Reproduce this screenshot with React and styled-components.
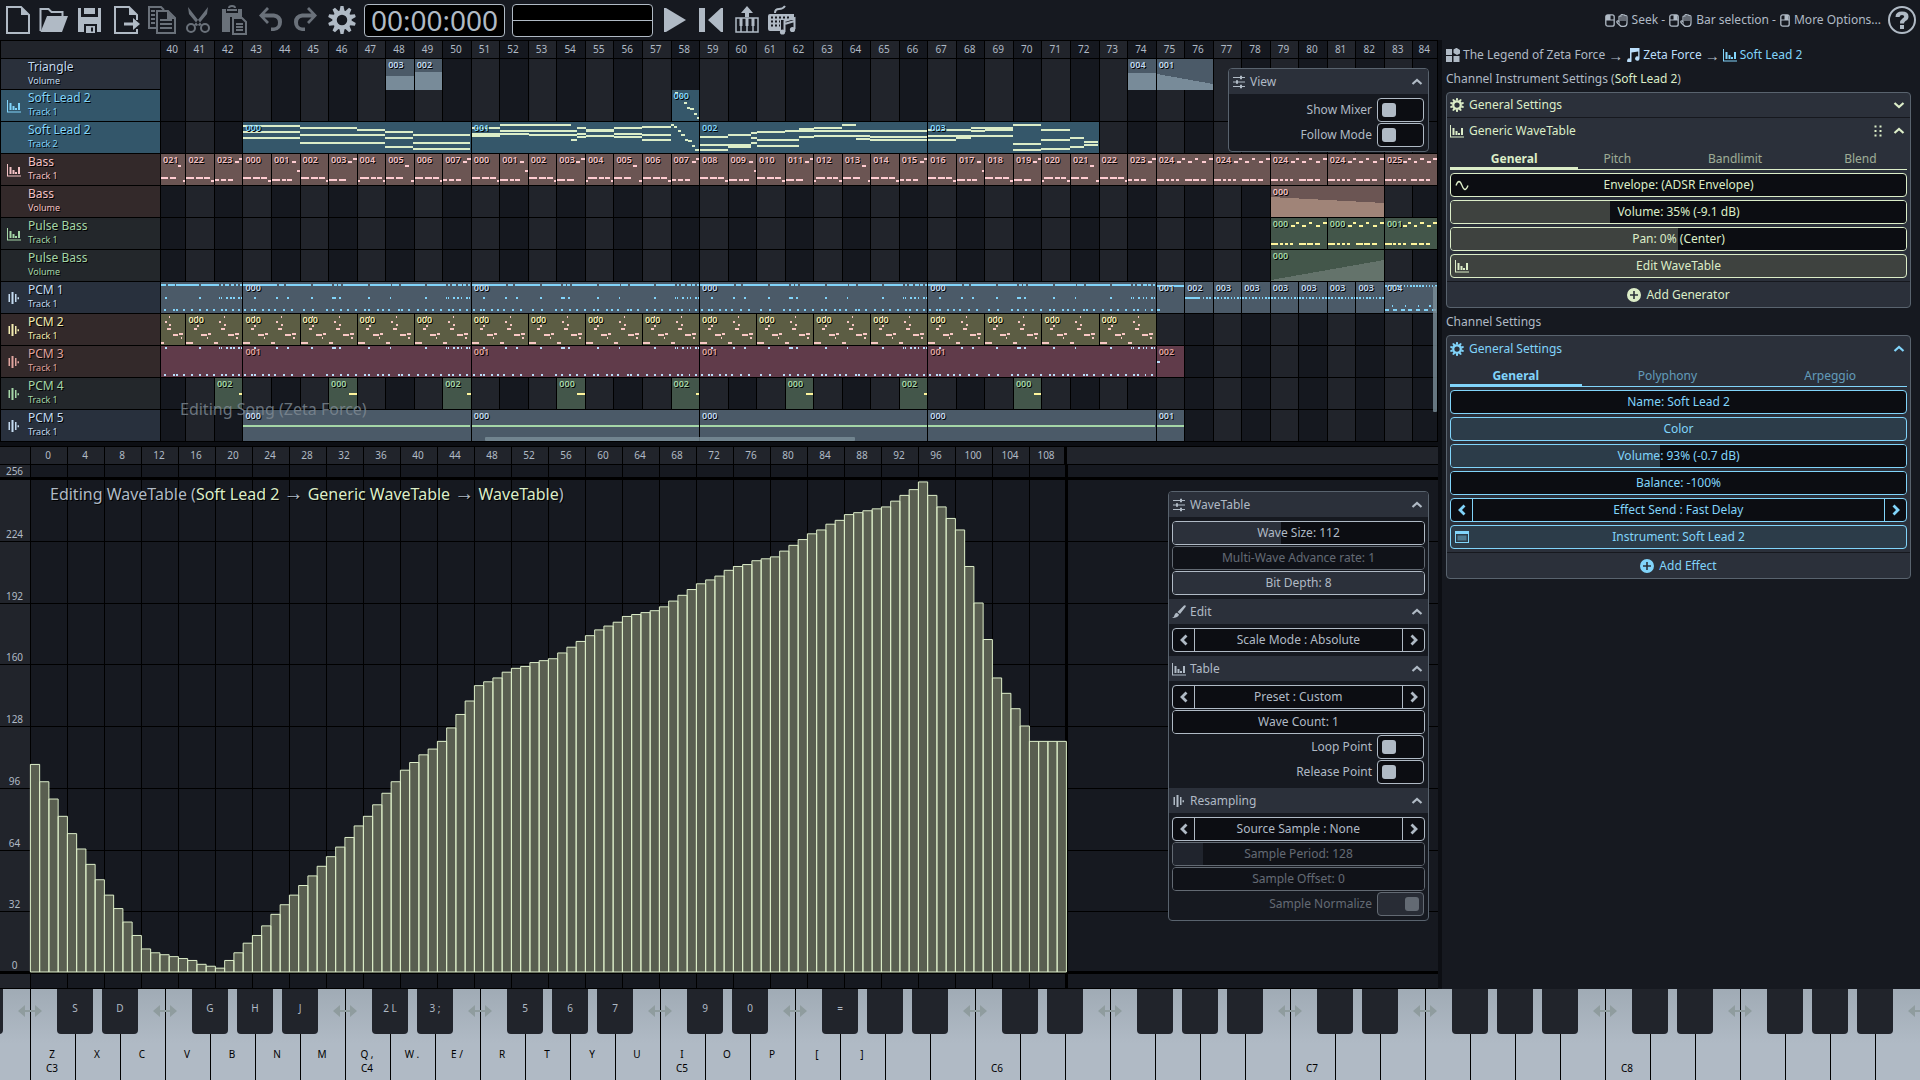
import React from "react";
import styled, { createGlobalStyle, css } from "styled-components";

const c = {
  page: "#161920",
  dark: "#15181f",
  light: "#21242b",
  gap: "#0c0e13",
  field: "#0c0d12",
  header: "#2b303a",
  edge: "#59636e",
  text: "#b0bac5",
  lime: "#dcedc8",
  sky: "#81d4fa",
  ice: "#bbdefb",
};

const GlobalStyle = createGlobalStyle`
  * { box-sizing: border-box; }
  html, body, #root { height: 100%; }
  body {
    margin: 0;
    overflow: hidden;
    background: ${c.page};
    color: ${c.text};
    font: 12px/16px "Noto Sans", sans-serif;
  }
  button, input, select {
    font: inherit;
    color: inherit;
    margin: 0;
    padding: 0;
    border: 0;
    background: none;
  }
  a { color: inherit; text-decoration: none; }
`;

/* ---------- frame ---------- */

const Page = styled.div`
  display: flex;
  flex-direction: column;
  height: 100vh;
`;
const Toolbar = styled.header`
  display: flex;
  align-items: center;
  flex: none;
  height: 40px;
`;
const ToolButton = styled.button`
  display: flex;
  align-items: center;
  justify-content: center;
  flex: none;
  width: 36px;
  height: 40px;
  opacity: ${(p) => (p.disabled ? 0.55 : 1)};
`;
const Display = styled.div`
  display: flex;
  align-items: center;
  justify-content: center;
  flex: none;
  width: 141px;
  height: 33px;
  margin: 1px 3px 0 4px;
  border: 1px solid ${c.text};
  border-radius: 4px;
  background: #000;
  font-size: 28px;
  line-height: 31px;
`;
const ScopeLine = styled.div`
  width: 100%;
  height: 1px;
  background: ${c.text};
`;
const Hints = styled.div`
  display: flex;
  align-items: center;
  gap: 4px;
  margin-left: auto;
  padding-right: 3px;
`;
const Gesture = styled.span`
  display: flex;
  align-items: center;
  gap: 1px;
`;
const Workspace = styled.div`
  display: flex;
  flex: 1;
  min-height: 0;
`;
const Editors = styled.main`
  display: flex;
  flex-direction: column;
  flex: 1;
  min-width: 0;
`;
const Arrow = styled.span`
  font-size: 1.25em;
  line-height: 1;
`;

/* ---------- icons ---------- */

const Svg = ({ size = 16, w, h, box = "0 0 28 28", children }) => (
  <svg width={w || size} height={h || size} viewBox={box} fill="currentColor" stroke="none" aria-hidden="true">
    {children}
  </svg>
);
const line = (width) => ({ fill: "none", stroke: "currentColor", strokeWidth: width });

const NewIcon = () => (
  <Svg size={28}>
    <path d="M3 1h14l8 8v18H3z" {...line(2)} />
    <path d="M17 1v8h8z" />
  </Svg>
);
const OpenIcon = () => (
  <Svg size={30} box="0 0 30 30">
    <path d="M1.500 26V4h8l3 3h11v4" {...line(2)} />
    <path d="M8 11h21l-6 16H1.500z" />
  </Svg>
);
const SaveIcon = () => (
  <Svg size={28}>
    <path d="M2 2h3v9h17V2h3v24h-4v-8H8v8H2zM8 2h11v6H8zM10 20h9v7h-9zM15 21.500v4h2v-4z" fillRule="evenodd" />
  </Svg>
);
const ExportIcon = () => (
  <Svg size={28}>
    <path d="M25 14V9l-8-8H3v26h22v-4" {...line(2)} />
    <path d="M17 1v8h8zM12 16.500h9V12l7 6-7 6v-4.500h-9z" />
  </Svg>
);
const CopyIcon = () => (
  <Svg size={28}>
    <path d="M8 22H1V1h12l3 3M3 5h4M3 9h4M3 13h4M3 17h4" {...line(2)} />
    <path d="M9 5h11l7 7v15H9zM12 14h12M12 18h12M12 22h12" {...line(2)} />
    <path d="M19 5v8h8z" />
  </Svg>
);
const CutIcon = () => (
  <Svg size={28}>
    <circle cx="7" cy="22" r="4" {...line(2)} />
    <circle cx="21" cy="22" r="4" {...line(2)} />
    <path d="M4 1l14 18-3 1L5 8zM24 1L10 19l3 1L23 8z" />
  </Svg>
);
const PasteIcon = () => (
  <Svg size={30} box="0 0 30 30">
    <path d="M3 4h4v4h12V4h4v8H11v15H3z" />
    <path d="M8 5h10M10 3q0-2 3-2t3 2" {...line(2)} />
    <path d="M14 13h9l4 4v12H14zM17 19h7M17 22h7M17 25h7" {...line(2)} />
  </Svg>
);
const UndoIcon = () => (
  <Svg size={28}>
    <path d="M3 9.500L11 1l2 2-4.500 4.500H18q8 1 8 8.500t-8 9h-3v-3.500h3q4-.5 4-5t-4.500-5h-9L13 16l-2 2z" />
  </Svg>
);
const RedoIcon = () => (
  <Svg size={28}>
    <path d="M25 9.500L17 1l-2 2 4.500 4.500H10Q2 8.500 2 16t8 9h3v-3.500h-3q-4-.5-4-5t4.500-5h9L15 16l2 2z" />
  </Svg>
);
const GearIcon = ({ size = 28 }) => (
  <Svg size={size}>
    <circle cx="14" cy="14" r="7.500" {...line(4.5)} />
    {[0, 36, 72, 108, 144, 180, 216, 252, 288, 324].map((a) => (
      <path key={a} d="M11.500 5L12.500 0h3l1 5z" transform={`rotate(${a} 14 14)`} />
    ))}
  </Svg>
);
const PlayIcon = () => (
  <Svg size={28}>
    <path d="M4 2h2l20 12L6 26H4z" />
  </Svg>
);
const RewindIcon = () => (
  <Svg size={28}>
    <path d="M3 2h6v24H3zM27 2v24h-2L12 14 25 2z" />
  </Svg>
);
const MidiIcon = () => (
  <Svg size={28}>
    <path d="M15 0l6 7h-4v4h-4V7H9z" />
    <path d="M4 12h22v14H4zM9 18v8M15 18v8M21 18v8" {...line(1.5)} />
    <path d="M7.500 12h3v8h-3zM13.500 12h3v8h-3zM19.500 12h3v8h-3z" />
  </Svg>
);
const KeyboardIcon = () => (
  <Svg size={30} box="0 0 30 30">
    <path d="M8 8q0-4 4-4t6-3" {...line(2)} />
    <path d="M3 9h24v6H14v11H3q-2 0-2-2V11q0-2 2-2z" />
    <path d="M4 12.500h20M4 16.500h9M4 20.500h9" fill="none" stroke={c.page} strokeWidth="2" strokeDasharray="2 2" />
    <path d="M17.500 27V16l10-3v11M17.500 19l10-3" {...line(2)} />
    <circle cx="15.500" cy="27" r="2.600" />
    <circle cx="25.500" cy="24.500" r="2.600" />
  </Svg>
);
const HelpIcon = () => (
  <Svg size={28}>
    <circle cx="14" cy="14" r="13" {...line(2)} />
    <path d="M7.500 11q0-5.500 6.500-5.500t6.500 5q0 3-3 4.500-1.500 1-1.500 2.500h-4q0-3.500 2.500-5 1.700-1 1.700-2 0-1.500-2.200-1.500T11.500 11zM12 19h4v4h-4z" />
  </Svg>
);
const MouseIcon = ({ right }) => (
  <Svg w={10} h={13} box="0 0 10 13">
    <rect x=".8" y=".8" width="8.400" height="11.400" rx="2" {...line(1.3)} />
    <path d={right ? "M5 1h3.500v5H5z" : "M1 1h4v5H1z"} />
    <path d="M1 6h8M5 1v5" {...line(1)} />
  </Svg>
);
const HandIcon = () => (
  <Svg w={12} h={13} box="0 0 12 13">
    <path d="M3 8V3q0-1 1-1t1 .5V1.500q0-1 1-1t1 1q0-.7 1-.7t1 1.200q0-.5 1-.5t1 1.300V9q0 3.200-3 3.400H5.500Q4 12 1 8.500q-.5-1 .3-1.500T3 8z" {...line(1.2)} />
    <path d="M5 2v5M7 1.500V7M9 2v5" {...line(1)} />
  </Svg>
);
const TableIcon = ({ size = 14 }) => (
  <Svg size={size} box="0 0 14 14">
    <path d="M0 1h1v11.500h13v1H0zM2.500 4h2v7h-2zM5.500 7h2v4h-2zM8 9h2v2H8zM11 4h2v7h-2z" />
  </Svg>
);
const SampleIcon = () => (
  <Svg size={14} box="0 0 14 14">
    <path d="M1.500 3h1.500v8H1.500zM4.500 1h2v12h-2zM8 3h1.500v8H8zM10.500 6.200H12v2h-1.500z" />
  </Svg>
);
const SlidersIcon = () => (
  <Svg size={14} box="0 0 14 14">
    <path d="M1 2.500h12M1 7h12M1 11.500h12" {...line(1)} />
    <path d="M8 .8h2v3.500H8zM4 5.200h2v3.500H4zM8 9.700h2v3.500H8z" />
  </Svg>
);
const BrushIcon = () => (
  <Svg size={14} box="0 0 14 14">
    <path d="M13.500.5q.5.5 0 1.500L8 9 5.500 7 12 .5q1-.6 1.500 0zM4.800 7.800L7 9.600Q6.500 13 0 13q2.500-1 2.500-3 .5-2 2.300-2.200z" />
  </Svg>
);
const NotesIcon = () => (
  <Svg size={14} box="0 0 14 14">
    <path d="M4 0h9.500v10.500a2.200 2.200 0 1 1-1.300-2V3.500L5.500 4.500v8a2.200 2.200 0 1 1-1.500-2z" />
  </Svg>
);
const BlocksIcon = () => (
  <Svg size={14} box="0 0 14 14">
    <path d="M0 1h6v6H0zM0 8h6v6H0zM7.500 8h6v6h-6zM10.500-.2L14 2v3.500L11 7 7.500 5V1.500z" />
  </Svg>
);
const WaveIcon = () => (
  <Svg size={14} box="0 0 14 14">
    <path d="M1 7.500Q2.500 3.500 4 3.500T7 7.500t3 4 3-4" {...line(1.3)} />
  </Svg>
);
const WindowIcon = () => (
  <Svg size={14} box="0 0 14 14">
    <path d="M0 1h14v12H0zM1 4v8h12V4z" fillRule="evenodd" />
    <path d="M2.500 5.500h9v5h-9z" opacity=".4" />
  </Svg>
);
const PlusIcon = () => (
  <Svg size={14} box="0 0 14 14">
    <path d="M7 0a7 7 0 1 1 0 14A7 7 0 1 1 7 0zM6.200 3v3.200H3v1.600h3.200V11h1.600V7.800H11V6.200H7.800V3z" fillRule="evenodd" />
  </Svg>
);
const GripIcon = () => (
  <Svg w={8} h={12} box="0 0 8 12">
    <path d="M.5.500h2v2h-2zM5.500.500h2v2h-2zM.5 5h2v2h-2zM5.500 5h2v2h-2zM.5 9.500h2v2h-2zM5.500 9.500h2v2h-2z" />
  </Svg>
);
const chevrons = { up: "M1.500 8L6 4l4.500 4", down: "M1.500 4L6 8l4.500-4", left: "M8.500 1.500L4 6l4.500 4.500", right: "M3.500 1.500L8 6l-4.500 4.500" };
const Chevron = ({ to }) => (
  <Svg size={12} box="0 0 12 12">
    <path d={chevrons[to]} {...line(to === "up" || to === "down" ? 2.2 : 2.8)} />
  </Svg>
);

/* ---------- song editor ---------- */

const FIRST_BAR = 40;
const BAR_COUNT = 45;

const Song = styled.section`
  position: relative;
  flex: none;
  border-top: 1px solid #000;
  border-left: 1px solid #000;
`;
const barColumns = css`
  display: grid;
  grid-template-columns: minmax(0, 89fr) repeat(43, minmax(0, 100fr)) minmax(0, 86fr);
  flex: 1;
  min-width: 0;
`;
const SongRuler = styled.div`
  display: flex;
  height: 18px;
  border-bottom: 1px solid #000;
  font-size: 10px;
  line-height: 17px;
  text-align: center;
`;
const RulerCorner = styled.div`
  flex: none;
  width: 160px;
  border-right: 1px solid #000;
  background: ${c.light};
`;
const RulerBars = styled.div`
  ${barColumns}
`;
const BarCell = styled.div`
  grid-row: 1;
  grid-column: ${(p) => p.$bar - FIRST_BAR + 1};
  padding-right: 2px;
  border-right: 1px solid #000;
  background: ${(p) => (p.$bar % 2 ? c.light : c.dark)};
`;
const TrackRow = styled.div`
  display: flex;
  height: ${(p) => (p.$first ? 31 : 32)}px;
  border-bottom: 1px solid #000;
`;
const TrackHead = styled.div`
  display: grid;
  grid-template-columns: 27px 1fr;
  align-items: center;
  flex: none;
  width: 160px;
  padding-bottom: 3px;
  border-right: 1px solid #000;
  background: ${(p) => p.$bg};
  color: ${(p) => p.$ink};
  text-shadow: 1px 1px 0 #000;
  svg { margin: 3px 0 0 6px; }
`;
const TrackText = styled.div`
  grid-column: 2;
  line-height: 15px;
  small {
    display: block;
    font-size: 9px;
    line-height: 13px;
  }
`;
const Lane = styled.div`
  ${barColumns}
`;
const Clip = styled.div`
  display: grid;
  grid-row: 1;
  grid-column: ${(p) => p.$col} / span ${(p) => p.$span};
  height: 31px;
  overflow: hidden;
  border-right: 1px solid #000;
  background: ${(p) => p.$bg};
  color: ${(p) => p.$ink};
  > * { grid-area: 1 / 1; }
  svg { display: block; width: 100%; height: 31px; }
  span {
    z-index: 1;
    padding-left: 2px;
    font-size: 9px;
    font-weight: 600;
    line-height: 12px;
    text-shadow: 1px 1px 0 #000;
  }
`;
const SongTitle = styled.div`
  position: absolute;
  left: 179px;
  bottom: 22px;
  color: #7f8a94;
  font-size: 16px;
  line-height: 22px;
  opacity: 0.8;
`;
const ScrollThumb = styled.div`
  position: absolute;
  border-radius: 1px;
  background: #7b8f99;
  opacity: 0.8;
  ${(p) =>
    p.$vertical
      ? "right: 1px; top: 245px; width: 4px; height: 126px;"
      : "left: 484px; bottom: 1px; width: 370px; height: 4px;"}
`;

// A note is [start bar, end bar, y]; a note of one dot is about a sixteenth of a bar.
const leadNotes = {
  0: [[0, 2, 3], [2, 4, 5], [4, 5, 7], [0, 2, 9], [5, 6, 9], [2, 5, 12], [6, 8, 12], [0, 2, 15], [5, 6, 15], [2, 5, 20], [6, 8, 20], [5, 6, 24], [6, 8, 26]],
  1: [[0, 1, 5], [0, 1, 11], [0, 1, 13], [1, 3.5, 2], [1, 3.7, 8], [1, 2, 11], [2, 3.7, 12], [3.5, 3.7, 17], [3.7, 4, 5], [3.7, 4, 11], [3.7, 4, 14], [4, 5, 7], [4, 5, 8], [4, 5, 13], [5, 6, 5], [5, 6, 11], [5, 6, 14], [6, 7, 4], [6, 7, 12], [6, 7, 17], [7, 7.1, 2], [7.1, 7.22, 4], [7.25, 7.35, 8], [7.35, 7.5, 12], [7.5, 7.6, 17], [7.6, 7.75, 18], [7.75, 7.85, 23], [7.85, 8, 27]],
  2: [[0, 1, 14], [0, 1, 22], [0, 1, 27], [1, 1.8, 12], [1, 1.8, 22], [1, 1.8, 24], [1.8, 2, 10], [1.8, 2, 15], [1.8, 2, 20], [2, 3, 9], [2, 3.5, 17], [2, 3.5, 23], [3, 8, 8], [3.5, 4, 6], [3.5, 4, 14], [4, 5, 5], [4, 6, 13], [5, 5.5, 2], [5.5, 6, 16], [6, 8, 14], [6, 8, 17]],
  3: [[0, 1.5, 7], [0, 3, 13], [0, 1, 17], [1, 1.5, 15], [1.5, 2, 5], [1.5, 2, 8], [2, 3, 5], [2, 3, 7], [3, 4, 2], [3, 4, 21], [3, 4, 27], [4, 5, 7], [4, 5, 17], [4, 5, 26], [5, 5.5, 15], [5, 5.5, 24], [5.5, 6, 19], [5.5, 6, 22]],
};
const leadFall = [[0.1, 0.2, 2], [0.25, 0.35, 5], [0.42, 0.55, 12], [0.56, 0.66, 17], [0.66, 0.8, 18], [0.8, 0.92, 23], [0.92, 1, 27]];
const bassNotes = [
  [[0, 0.3, 23], [0.36, 0.62, 23], [0.66, 0.86, 23], [0.9, 1, 26]],
  [[0, 0.3, 25], [0.36, 0.5, 25], [0.56, 0.74, 25], [0.72, 0.86, 7], [0.9, 1, 16]],
  [[0, 0.3, 23], [0.36, 0.62, 23], [0.66, 0.86, 23], [0.9, 1, 26]],
  [[0, 0.3, 25], [0.36, 0.6, 25], [0.68, 0.82, 7], [0.86, 1, 4]],
  [[0, 0.08, 26], [0.08, 0.4, 23], [0.46, 0.66, 23], [0.7, 0.88, 23], [0.92, 1, 26]],
  [[0, 0.3, 23], [0.36, 0.62, 23], [0.7, 0.84, 11], [0.9, 1, 26]],
  [[0, 0.3, 23], [0.36, 0.62, 23], [0.66, 0.86, 23], [0.9, 1, 26]],
  [[0, 0.16, 25], [0.22, 0.4, 25], [0.48, 0.66, 25], [0.72, 0.86, 7], [0.88, 1, 4]],
];
const longBass = [[0, 0.26, 25], [0.32, 0.42, 25], [0.5, 0.62, 25], [0.68, 0.8, 25], [1, 1.24, 25], [1.3, 1.5, 25], [1.56, 1.74, 25], [0.7, 0.86, 7], [0.88, 1, 4], [1.12, 1.24, 7], [1.36, 1.48, 4], [1.62, 1.76, 7], [1.86, 2, 4]];
const hits = [0.4, 1.16, 1.56, 2.4, 3.15, 3.22, 3.38, 4.4, 5.16, 6.4, 7.13, 7.2, 7.4, 7.55, 7.66, 7.85, 7.94].map((x) => [x, x + 0.06]);
const pulses = [0.05, 0.28, 0.38, 0.67, 0.88, 1.08, 1.4, 1.7, 2.1, 2.42, 2.92, 3.12, 3.42, 3.66, 3.94, 4.25, 4.4, 4.72, 4.88, 5.1, 5.45, 5.55, 5.82, 6.12, 6.4, 6.66, 6.92, 7.2, 7.35, 7.62, 7.85].map((x) => [x, x + 0.07]);
const gaps = [1.2, 1.45, 2.4, 3.15, 3.3, 3.45, 4.4, 5.2, 5.5, 6.4, 7.15, 7.3, 7.5, 7.7, 7.85];
const at = (list, y) => list.map(([a, b]) => [a, b, y]);
const topBand = [0, ...gaps.map((g) => g + 0.06)].map((s, i) => [s, gaps[i] ?? 8, 2]);
const pcm1 = [...topBand, ...at(hits, 15), ...at(pulses, 27)];
const pcm3 = [...at(hits, 1), ...at(pulses, 28)];
const pcm2 = [[0, 0.24, 28], [0.4, 0.44, 2], [0.28, 0.4, 14], [0.38, 0.46, 11], [0.52, 0.76, 20], [0.78, 0.88, 19], [0.74, 0.8, 23], [1, 1.14, 28], [1.16, 1.26, 7], [1.34, 1.42, 10], [1.26, 1.4, 14], [1.34, 1.38, 2], [1.5, 1.7, 20], [1.74, 1.9, 19], [1.8, 1.86, 23]];
const dots = (from, to, step, y) => {
  const out = [];
  for (let x = from; x < to; x += step) out.push([x, Math.min(x + step / 2, to), y]);
  return out;
};
const shift = (notes, by) => notes.map(([a, b, y]) => [a - by, b - by, y]).filter((n) => n[1] > 0);
const name3 = (n) => String(n).padStart(3, "0");
const range = (n) => Array.from({ length: n }, (_, i) => i);

const bassClips = range(35).map((i) => {
  const bar = 40 + i;
  const n = bar < 43 ? bar - 19 : bar < 51 ? bar - 43 : bar - 51;
  return { bar, span: 1, name: name3(n), notes: bassNotes[n % 8] };
});
const eightBars = (name, notes) => [
  { bar: 40, span: 3, name: "", notes: shift(notes, 5) },
  ...[43, 51, 59, 67].map((bar) => ({ bar, span: 8, name, notes })),
];

const tones = {
  ice: { ink: "#c3daf0", head: "#2a303b", clip: "#4b5a68", note: c.sky, fill: "#788b99" },
  sky: { ink: c.sky, head: "#33566a", clip: "#35576a", note: "#dcedc8" },
  pink: { ink: "#f3c1c4", head: "#33292a", clip: "#6b5553", note: "#ffcdd2", fill: "#a08478" },
  green: { ink: "#a5d6a7", head: "#23272b", clip: "#43564a", note: "#fff59d", fill: "#64736b" },
  yellow: { ink: "#f3ecb0", head: "#33292a", clip: "#5c5d44", note: "#f8c8c4" },
  red: { ink: "#e0a49e", head: "#33292a", clip: "#603b4a", note: "#bbdefb" },
};

const tracks = [
  { name: "Triangle", sub: "Volume", tone: "ice", clips: [
    { bar: 48, span: 1, name: "003", slope: [17, 17] },
    { bar: 49, span: 1, name: "002", slope: [13, 13] },
    { bar: 74, span: 1, name: "004", slope: [14, 14] },
    { bar: 75, span: 2, name: "001", slope: [15, 25] },
  ] },
  { name: "Soft Lead 2", sub: "Track 1", tone: "sky", icon: TableIcon, clips: [{ bar: 58, span: 1, name: "000", notes: leadFall }] },
  { name: "Soft Lead 2", sub: "Track 2", tone: "sky", clips: [
    { bar: 43, span: 8, name: "000", notes: leadNotes[0] },
    { bar: 51, span: 8, name: "001", notes: leadNotes[1] },
    { bar: 59, span: 8, name: "002", notes: leadNotes[2] },
    { bar: 67, span: 6, name: "003", notes: leadNotes[3] },
  ] },
  { name: "Bass", sub: "Track 1", tone: "pink", icon: TableIcon, clips: [
    ...bassClips,
    ...[75, 77, 79, 81, 83].map((bar) => ({ bar, span: 2, name: bar === 83 ? "025" : "024", notes: longBass })),
  ] },
  { name: "Bass", sub: "Volume", tone: "pink", clips: [{ bar: 79, span: 4, name: "000", slope: [11, 17] }] },
  { name: "Pulse Bass", sub: "Track 1", tone: "green", icon: TableIcon, clips: [79, 81, 83].map((bar) => ({ bar, span: 2, name: bar === 83 ? "001" : "000", notes: longBass })) },
  { name: "Pulse Bass", sub: "Volume", tone: "green", clips: [{ bar: 79, span: 4, name: "000", slope: [30, 10] }] },
  { name: "PCM 1", sub: "Track 1", tone: "ice", icon: SampleIcon, head: "#28303d", clips: [
    ...eightBars("000", pcm1),
    { bar: 75, span: 1, name: "001", notes: [[0, 1, 3], [0, 0.1, 27]] },
    { bar: 76, span: 1, name: "002", notes: [[0, 0.56, 15], ...dots(0.64, 1, 0.12, 15)] },
    ...range(6).map((i) => ({ bar: 77 + i, span: 1, name: "003", notes: dots(0, 1, 0.12, 15) })),
    { bar: 83, span: 2, name: "004", notes: [...dots(0, 2, 0.12, 3), ...dots(0, 2, 0.3, 27), [0.26, 0.32, 23], [0.76, 0.82, 23], [1.26, 1.32, 23], [1.7, 1.76, 23]] },
  ] },
  { name: "PCM 2", sub: "Track 1", tone: "yellow", icon: SampleIcon, clips: [
    { bar: 40, span: 1, name: "", notes: shift(pcm2, 1) },
    ...range(17).map((i) => ({ bar: 41 + i * 2, span: 2, name: "000", notes: pcm2 })),
  ] },
  { name: "PCM 3", sub: "Track 1", tone: "red", icon: SampleIcon, clips: [...eightBars("001", pcm3), { bar: 75, span: 1, name: "002", notes: [[0, 0.12, 15]] }] },
  { name: "PCM 4", sub: "Track 1", tone: "green", icon: SampleIcon, clips: range(8).map((i) => ({ bar: 42 + i * 4, span: 1, name: i % 2 ? "000" : "002", notes: [[i % 2 ? 0.74 : 0.88, 1, 15]] })) },
  { name: "PCM 5", sub: "Track 1", tone: "ice", icon: SampleIcon, head: "#28303d", clips: [
    ...[43, 51, 59, 67].map((bar) => ({ bar, span: 8, name: "000", notes: [[0, 8, 15]], note: "#a5d6a7" })),
    { bar: 75, span: 1, name: "001", notes: [[0, 1, 15]], note: "#a5d6a7" },
  ] },
];

function ClipView({ clip, tone }) {
  const { bar, span, name, notes, slope } = clip;
  return (
    <Clip $col={bar - FIRST_BAR + 1} $span={span} $bg={tone.clip} $ink={tone.ink}>
      <svg viewBox={`0 0 ${span * 100} 31`} preserveAspectRatio="none" shapeRendering="crispEdges" aria-hidden="true">
        {slope && <path d={`M0 ${slope[0]}L${span * 100} ${slope[1]}V31H0z`} fill={tone.fill} />}
        {notes && notes.map(([a, b, y], i) => (
          <rect key={i} x={a * 100} y={y} width={(b - a) * 100} height="2" fill={clip.note || tone.note} />
        ))}
      </svg>
      <span>{name}</span>
    </Clip>
  );
}

function SongEditor() {
  const bars = range(BAR_COUNT).map((i) => FIRST_BAR + i);
  return (
    <Song>
      <SongRuler>
        <RulerCorner />
        <RulerBars>
          {bars.map((b) => <BarCell key={b} $bar={b}>{b}</BarCell>)}
        </RulerBars>
      </SongRuler>
      {tracks.map((t, i) => {
        const tone = tones[t.tone];
        const Icon = t.icon;
        return (
          <TrackRow key={i} $first={i === 0}>
            <TrackHead $bg={t.head || tone.head} $ink={tone.ink}>
              {Icon && <Icon />}
              <TrackText>{t.name}<small>{t.sub}</small></TrackText>
            </TrackHead>
            <Lane>
              {bars.map((b) => <BarCell key={b} $bar={b} />)}
              {t.clips.map((clip) => <ClipView key={clip.bar} clip={clip} tone={tone} />)}
            </Lane>
          </TrackRow>
        );
      })}
      <SongTitle>Editing Song (Zeta Force)</SongTitle>
      <ScrollThumb $vertical />
      <ScrollThumb />
      <FloatingPanel $top={27} $width={201}>
        <PanelHeader icon={SlidersIcon} title="View" />
        <PanelBody>
          <Toggle id="mixer" label="Show Mixer" />
          <Toggle id="follow" label="Follow Mode" />
        </PanelBody>
      </FloatingPanel>
    </Song>
  );
}

/* ---------- floating panels and controls ---------- */

const FloatingPanel = styled.aside`
  position: absolute;
  top: ${(p) => p.$top}px;
  right: 9px;
  z-index: 2;
  width: ${(p) => p.$width}px;
  overflow: hidden;
  border: 1px solid ${c.edge};
  border-radius: 4px;
  background: ${c.page};
`;
const PanelHead = styled.button`
  display: flex;
  align-items: center;
  gap: 4px;
  width: 100%;
  height: 25px;
  padding: 0 5px 0 3px;
  background: ${c.header};
  text-align: left;
  span { flex: 1; }
`;
const PanelBody = styled.div`
  display: flex;
  flex-direction: column;
  gap: 1px;
  padding: 4px 3px;
`;
function PanelHeader({ icon: Icon, title }) {
  return (
    <PanelHead type="button">
      <Icon />
      <span>{title}</span>
      <Chevron to="up" />
    </PanelHead>
  );
}

const fieldFrame = css`
  height: 24px;
  border: 1px solid currentColor;
  border-radius: 4px;
  overflow: hidden;
`;
const tintOf = (p) => p.$tint || c.header;

const FieldButton = styled.button`
  ${fieldFrame}
  display: grid;
  grid-template-columns: 22px 1fr 22px;
  align-items: center;
  justify-items: center;
  width: 100%;
  background: ${(p) => (p.$filled ? tintOf(p) : c.field)};
  span { grid-column: 2; }
`;
const TextField = styled.label`
  ${fieldFrame}
  display: flex;
  align-items: center;
  justify-content: center;
  gap: 3px;
  background: ${c.field};
  input { field-sizing: content; outline: none; }
`;
const SliderFrame = styled.div`
  ${fieldFrame}
  display: grid;
  opacity: ${(p) => (p.$off ? 0.5 : 1)};
  > * { grid-area: 1 / 1; }
  label { place-self: center; pointer-events: none; }
  input {
    appearance: none;
    width: 100%;
    height: 22px;
    background: linear-gradient(90deg, ${tintOf} ${(p) => p.$fill}%, ${c.field} ${(p) => p.$fill}%);
  }
  input::-webkit-slider-thumb { appearance: none; width: 1px; height: 22px; }
`;
function Slider({ id, text, fill, tint, off }) {
  return (
    <SliderFrame $fill={fill} $tint={tint} $off={off}>
      <input id={id} type="range" min="0" max="100" defaultValue={fill} disabled={off} />
      <label htmlFor={id}>{text}</label>
    </SliderFrame>
  );
}
const StepperFrame = styled.div`
  ${fieldFrame}
  display: grid;
  grid-template-columns: 22px 1fr 22px;
  background: ${c.field};
  > button {
    display: flex;
    align-items: center;
    justify-content: center;
  }
  > button:first-child { border-right: 1px solid currentColor; }
  > button:last-child { border-left: 1px solid currentColor; }
`;
const StepperValue = styled.div`
  display: flex;
  align-items: center;
  justify-content: center;
  gap: 3px;
  select { appearance: none; outline: none; }
`;
function Stepper({ id, label, value }) {
  return (
    <StepperFrame>
      <button type="button" aria-label={`Previous ${label}`}><Chevron to="left" /></button>
      <StepperValue>
        <label htmlFor={id}>{label} :</label>
        <select id={id} defaultValue={value}><option>{value}</option></select>
      </StepperValue>
      <button type="button" aria-label={`Next ${label}`}><Chevron to="right" /></button>
    </StepperFrame>
  );
}
const ToggleRow = styled.div`
  display: flex;
  align-items: center;
  justify-content: flex-end;
  gap: 5px;
  height: 24px;
  padding-right: 1px;
  opacity: ${(p) => (p.$off ? 0.5 : 1)};
  input {
    appearance: none;
    display: flex;
    align-items: center;
    width: 47px;
    height: 24px;
    padding: 0 4px;
    border: 1px solid ${c.text};
    border-radius: 4px;
    background: ${c.field};
  }
  input::before {
    content: "";
    width: 14px;
    height: 14px;
    border-radius: 3px;
    background: ${c.text};
  }
  input:checked { justify-content: flex-end; background: #3a404b; }
`;
function Toggle({ id, label, off, on }) {
  return (
    <ToggleRow $off={off}>
      <label htmlFor={id}>{label}</label>
      <input id={id} type="checkbox" defaultChecked={on} disabled={off} />
    </ToggleRow>
  );
}

/* ---------- wavetable editor ---------- */

const samples = [
  108, 99, 90, 81, 72, 64, 56, 48, 40, 33, 26, 19, 12, 10, 9, 8, 7, 6, 4, 3, 2, 6, 10, 15, 19, 24, 30, 35,
  40, 45, 50, 55, 60, 65, 70, 76, 81, 87, 93, 99, 105, 109, 113, 116, 120, 127, 134, 141, 149, 151, 153, 156, 158, 159, 161, 162,
  163, 166, 169, 172, 175, 178, 180, 182, 185, 186, 187, 188, 190, 193, 196, 199, 202, 204, 206, 209, 211, 212, 214, 215, 216, 219, 222, 225,
  228, 230, 233, 235, 238, 239, 240, 241, 242, 245, 248, 251, 255, 248, 242, 236, 230, 211, 192, 173, 153, 145, 137, 128, 120, 120, 120, 120,
];

const Wave = styled.section`
  position: relative;
  display: flex;
  flex-direction: column;
  flex: 1;
  min-height: 0;
  border-top: 1px solid #000;
`;
const Divider = styled.div`
  flex: none;
  height: 4px;
  background: ${c.gap};
`;
const gridLines = css`
  background-image: repeating-linear-gradient(90deg, transparent 0 36px, #000 36px 37px);
`;
const WaveRuler = styled.div`
  display: flex;
  flex: none;
  height: 18px;
  padding-left: 30px;
  border-bottom: 1px solid #000;
  background: ${c.light};
  font-size: 10px;
  line-height: 17px;
`;
const RulerTick = styled.div`
  flex: none;
  width: 37px;
  padding-right: 2px;
  border-left: 1px solid #000;
  text-align: center;
  &:last-child { width: 38px; border-right: 3px solid #000; }
`;
const Strip = styled.div`
  display: flex;
  flex: none;
  height: 15px;
  border-bottom: ${(p) => (p.$top ? 3 : 1)}px solid #000;
`;
const StripLabel = styled.div`
  flex: none;
  width: 31px;
  padding-right: 1px;
  border-right: 1px solid #000;
  background: ${c.light};
  font-size: 10px;
  line-height: 12px;
  text-align: center;
`;
const StripGrid = styled.div`
  flex: none;
  width: 1037px;
  ${gridLines}
  border-right: 3px solid #000;
`;
const Plot = styled.div`
  display: grid;
  grid-template-columns: 31px 1037px 1fr;
  grid-template-rows: minmax(0, 1fr);
  flex: 1;
  min-height: 0;
`;
const Gutter = styled.div`
  display: grid;
  grid-area: 1 / 1;
  grid-auto-rows: 1fr;
  border-right: 1px solid #000;
  background: ${c.light};
`;
const GutterLabel = styled.div`
  display: flex;
  align-items: flex-end;
  justify-content: center;
  padding-right: 1px;
  border-bottom: 1px solid #000;
  font-size: 10px;
  line-height: 14px;
  &:last-child { border-bottom-width: 3px; line-height: 12px; }
`;
const Levels = styled.div`
  display: grid;
  grid-column: 2 / 4;
  grid-row: 1;
  grid-auto-rows: 1fr;
`;
const Level = styled.div`
  border-bottom: 1px solid #000;
  &:last-child { border-bottom-width: 3px; }
`;
const Bars = styled.div`
  grid-area: 1 / 2;
  min-height: 0;
  ${gridLines}
  border-right: 3px solid #000;
  padding-bottom: 2px;
  svg { display: block; width: 1036px; height: 100%; overflow: visible; }
`;
const WaveTitle = styled.div`
  position: absolute;
  top: 36px;
  left: 50px;
  font-size: 16px;
  line-height: 22px;
  text-shadow: 1px 1px 0 #000;
  b { font-weight: 400; color: ${c.lime}; }
`;

const STEP = 9.25;
const barPath = samples.map((v, i) => `M${i * STEP} 256V${256 - v}H${(i + 1) * STEP}V256`).join("");

function WaveEditor() {
  return (
    <Wave>
      <WaveRuler>
        {range(28).map((i) => <RulerTick key={i}>{i * 4}</RulerTick>)}
      </WaveRuler>
      <Strip $top>
        <StripLabel>256</StripLabel>
        <StripGrid />
      </Strip>
      <Plot>
        <Gutter>
          {[224, 192, 160, 128, 96, 64, 32, 0].map((v) => <GutterLabel key={v}>{v}</GutterLabel>)}
        </Gutter>
        <Levels>{range(8).map((i) => <Level key={i} />)}</Levels>
        <Bars>
          <svg viewBox="0.6 0 1036 256" preserveAspectRatio="none" shapeRendering="crispEdges" role="img" aria-label="Wave samples">
            <path d={barPath + "M0 256H1036"} fill="#595e50" stroke={c.lime} strokeWidth="1" vectorEffect="non-scaling-stroke" />
          </svg>
        </Bars>
      </Plot>
      <Strip>
        <StripLabel />
        <StripGrid />
      </Strip>
      <WaveTitle>
        Editing WaveTable (<b>Soft Lead 2</b> <Arrow>→</Arrow> <b>Generic WaveTable</b> <Arrow>→</Arrow> <b>WaveTable</b>)
      </WaveTitle>
      <FloatingPanel $top={44} $width={261}>
        <PanelHeader icon={SlidersIcon} title="WaveTable" />
        <PanelBody>
          <Slider id="wave-size" text="Wave Size: 112" fill={43} />
          <Slider id="advance" text="Multi-Wave Advance rate: 1" fill={0} off />
          <Slider id="depth" text="Bit Depth: 8" fill={100} />
        </PanelBody>
        <PanelHeader icon={BrushIcon} title="Edit" />
        <PanelBody>
          <Stepper id="scale" label="Scale Mode" value="Absolute" />
        </PanelBody>
        <PanelHeader icon={TableIcon} title="Table" />
        <PanelBody>
          <Stepper id="preset" label="Preset" value="Custom" />
          <Slider id="count" text="Wave Count: 1" fill={0} />
          <Toggle id="loop" label="Loop Point" />
          <Toggle id="release" label="Release Point" />
        </PanelBody>
        <PanelHeader icon={SampleIcon} title="Resampling" />
        <PanelBody>
          <Stepper id="source" label="Source Sample" value="None" />
          <Slider id="period" text="Sample Period: 128" fill={12} off />
          <Slider id="offset" text="Sample Offset: 0" fill={0} off />
          <Toggle id="normalize" label="Sample Normalize" off on />
        </PanelBody>
      </FloatingPanel>
    </Wave>
  );
}

/* ---------- settings sidebar ---------- */

const Sidebar = styled.aside`
  display: flex;
  flex-direction: column;
  flex: none;
  width: 482px;
  padding: 7px 9px 0 4px;
  border-left: 4px solid ${c.gap};
`;
const Crumbs = styled.nav`
  display: flex;
  align-items: center;
  gap: 3px;
  height: 16px;
  a {
    display: flex;
    align-items: center;
    gap: 3px;
  }
  a:nth-of-type(2) { color: ${c.ice}; }
  a:nth-of-type(3) { color: ${c.sky}; }
`;
const SideTitle = styled.h2`
  height: 16px;
  margin: ${(p) => (p.$gap ? 6 : 8)}px 0 5px;
  font-size: 12px;
  font-weight: 400;
  line-height: 16px;
  b { font-weight: 400; color: ${c.lime}; }
`;
const Card = styled.section`
  display: flex;
  flex-direction: column;
  overflow: hidden;
  border: 1px solid ${c.edge};
  border-radius: 4px;
  background: ${c.header};
  color: ${(p) => p.$ink};
`;
const CardHead = styled.button`
  display: flex;
  align-items: center;
  gap: 5px;
  height: 25px;
  padding: 0 5px 0 3px;
  text-align: left;
  border-bottom: ${(p) => (p.$closed ? "1px solid #16181e" : "0")};
  span { flex: 1; }
  svg + svg { margin-left: 6px; }
`;
const Tabs = styled.div`
  display: flex;
  height: 23px;
  margin: ${(p) => (p.$tight ? 3 : 4)}px 3px 3px;
  border-bottom: 1px solid currentColor;
`;
const Tab = styled.button`
  flex: ${(p) => p.$weight} 1 0;
  min-width: 0;
  padding-top: 1px;
  font-weight: ${(p) => (p.$active ? 700 : 400)};
  box-shadow: ${(p) => (p.$active ? "inset 0 -2px 0 currentColor" : "none")};
  span { opacity: ${(p) => (p.$active ? 1 : 0.65)}; }
`;
const Fields = styled.div`
  display: flex;
  flex-direction: column;
  gap: 3px;
  padding: 0 3px 3px;
`;
const AddButton = styled.button`
  display: flex;
  align-items: center;
  justify-content: center;
  gap: 5px;
  height: 26px;
  border-top: 1px solid #16181e;
`;
const limeTint = "#3e423f";
const skyTint = "#2c3c49";

function TabBar({ tabs, tight }) {
  return (
    <Tabs role="tablist" $tight={tight}>
      {tabs.map(([name, weight], i) => (
        <Tab key={name} type="button" role="tab" aria-selected={i === 0} $weight={weight} $active={i === 0}>
          <span>{name}</span>
        </Tab>
      ))}
    </Tabs>
  );
}

function Settings() {
  return (
    <Sidebar>
      <Crumbs>
        <a href="#module"><BlocksIcon />The Legend of Zeta Force</a><Arrow>→</Arrow>
        <a href="#song"><NotesIcon />Zeta Force</a><Arrow>→</Arrow>
        <a href="#channel"><TableIcon />Soft Lead 2</a>
      </Crumbs>
      <SideTitle>Channel Instrument Settings (<b>Soft Lead 2</b>)</SideTitle>
      <Card $ink={c.lime}>
        <CardHead type="button" $closed><GearIcon size={14} /><span>General Settings</span><Chevron to="down" /></CardHead>
        <CardHead type="button"><TableIcon /><span>Generic WaveTable</span><GripIcon /><Chevron to="up" /></CardHead>
        <TabBar tabs={[["General", 128], ["Pitch", 78], ["Bandlimit", 157], ["Blend", 93]]} />
        <Fields>
          <FieldButton type="button"><WaveIcon /><span>Envelope: (ADSR Envelope)</span></FieldButton>
          <Slider id="gen-volume" text="Volume: 35% (-9.1 dB)" fill={35} tint={limeTint} />
          <Slider id="gen-pan" text="Pan: 0% (Center)" fill={50} tint={limeTint} />
          <FieldButton type="button" $filled $tint={limeTint}><TableIcon /><span>Edit WaveTable</span></FieldButton>
        </Fields>
        <AddButton type="button"><PlusIcon />Add Generator</AddButton>
      </Card>
      <SideTitle $gap>Channel Settings</SideTitle>
      <Card $ink={c.sky}>
        <CardHead type="button"><GearIcon size={14} /><span>General Settings</span><Chevron to="up" /></CardHead>
        <TabBar tight tabs={[["General", 131], ["Polyphony", 171], ["Arpeggio", 153]]} />
        <Fields>
          <TextField>Name: <input type="text" defaultValue="Soft Lead 2" /></TextField>
          <FieldButton type="button" $filled $tint={skyTint}><span>Color</span></FieldButton>
          <Slider id="ch-volume" text="Volume: 93% (-0.7 dB)" fill={46} tint={skyTint} />
          <Slider id="ch-balance" text="Balance: -100%" fill={0} tint={skyTint} />
          <Stepper id="send" label="Effect Send" value="Fast Delay" />
          <FieldButton type="button" $filled $tint={skyTint}><WindowIcon /><span>Instrument: Soft Lead 2</span></FieldButton>
        </Fields>
        <AddButton type="button"><PlusIcon />Add Effect</AddButton>
      </Card>
    </Sidebar>
  );
}

/* ---------- piano ---------- */

const Keys = styled.footer`
  display: flex;
  flex: none;
  justify-content: flex-end;
  height: 91px;
  overflow: hidden;
`;
const WhiteKey = styled.div`
  position: relative;
  display: flex;
  flex-direction: column;
  justify-content: flex-end;
  flex: none;
  width: 45px;
  padding: 0 2px 5px 0;
  border-left: 1px solid #000;
  background: linear-gradient(#a0abb5, #b0bac5 60%);
  color: #000;
  font-size: 10px;
  line-height: 14px;
  text-align: center;
  span { height: 14px; white-space: pre; }
`;
const BlackKey = styled.div`
  position: absolute;
  top: 0;
  right: -18px;
  z-index: 1;
  width: 36px;
  height: 45px;
  border-radius: 0 0 4px 4px;
  background: ${c.light};
  color: ${c.text};
  line-height: 38px;
  white-space: pre;
`;
const KeyArrow = styled.div`
  position: absolute;
  top: 16px;
  right: -12px;
  z-index: 1;
  width: 24px;
  height: 12px;
  color: #8f9c9e;
  svg { display: block; }
`;
const whiteLabels = ["Z", "X", "C", "V", "B", "N", "M", "Q ,", "W .", "E /", "R", "T", "Y", "U", "I", "O", "P", "[", "]"];
const blackLabels = { 0: "S", 1: "D", 3: "G", 4: "H", 5: "J", 7: "2 L", 8: "3 ;", 10: "5", 11: "6", 12: "7", 14: "9", 15: "0", 17: "=" };

function Piano() {
  return (
    <Keys>
      {range(44).map((n) => {
        const key = n - 2;
        const step = (key + 7) % 7;
        return (
          <WhiteKey key={key}>
            {step === 2 || step === 6 ? (
              <KeyArrow>
                <Svg w={24} h={12} box="0 0 24 12">
                  <path d="M0 6l7-6v5h10V0l7 6-7 6V7H7v5z" />
                </Svg>
              </KeyArrow>
            ) : (
              <BlackKey>{blackLabels[key]}</BlackKey>
            )}
            <span>{whiteLabels[key]}</span>
            <span>{step === 0 ? `C${3 + key / 7}` : ""}</span>
          </WhiteKey>
        );
      })}
    </Keys>
  );
}

/* ---------- app ---------- */

const fileTools = [
  ["New", NewIcon], ["Open", OpenIcon], ["Save", SaveIcon], ["Export", ExportIcon],
  ["Copy", CopyIcon, true], ["Cut", CutIcon, true], ["Paste", PasteIcon, true],
  ["Undo", UndoIcon, true], ["Redo", RedoIcon, true], ["Settings", GearIcon],
];
const playTools = [["Play", PlayIcon], ["Rewind", RewindIcon], ["MIDI input", MidiIcon], ["Keyboard input", KeyboardIcon]];

const tools = (list) =>
  list.map(([label, Icon, disabled]) => (
    <ToolButton key={label} type="button" aria-label={label} disabled={disabled}>
      <Icon />
    </ToolButton>
  ));

export default function App() {
  return (
    <>
      <GlobalStyle />
      <Page>
        <Toolbar>
          {tools(fileTools)}
          <Display>00:00:000</Display>
          <Display><ScopeLine /></Display>
          {tools(playTools)}
          <Hints>
            <Gesture><MouseIcon /><HandIcon /></Gesture>Seek -
            <Gesture><MouseIcon right /><HandIcon /></Gesture>Bar selection -
            <Gesture><MouseIcon right /></Gesture>More Options...
          </Hints>
          <ToolButton type="button" aria-label="Help"><HelpIcon /></ToolButton>
        </Toolbar>
        <Workspace>
          <Editors>
            <SongEditor />
            <Divider />
            <WaveEditor />
          </Editors>
          <Settings />
        </Workspace>
        <Piano />
      </Page>
    </>
  );
}
